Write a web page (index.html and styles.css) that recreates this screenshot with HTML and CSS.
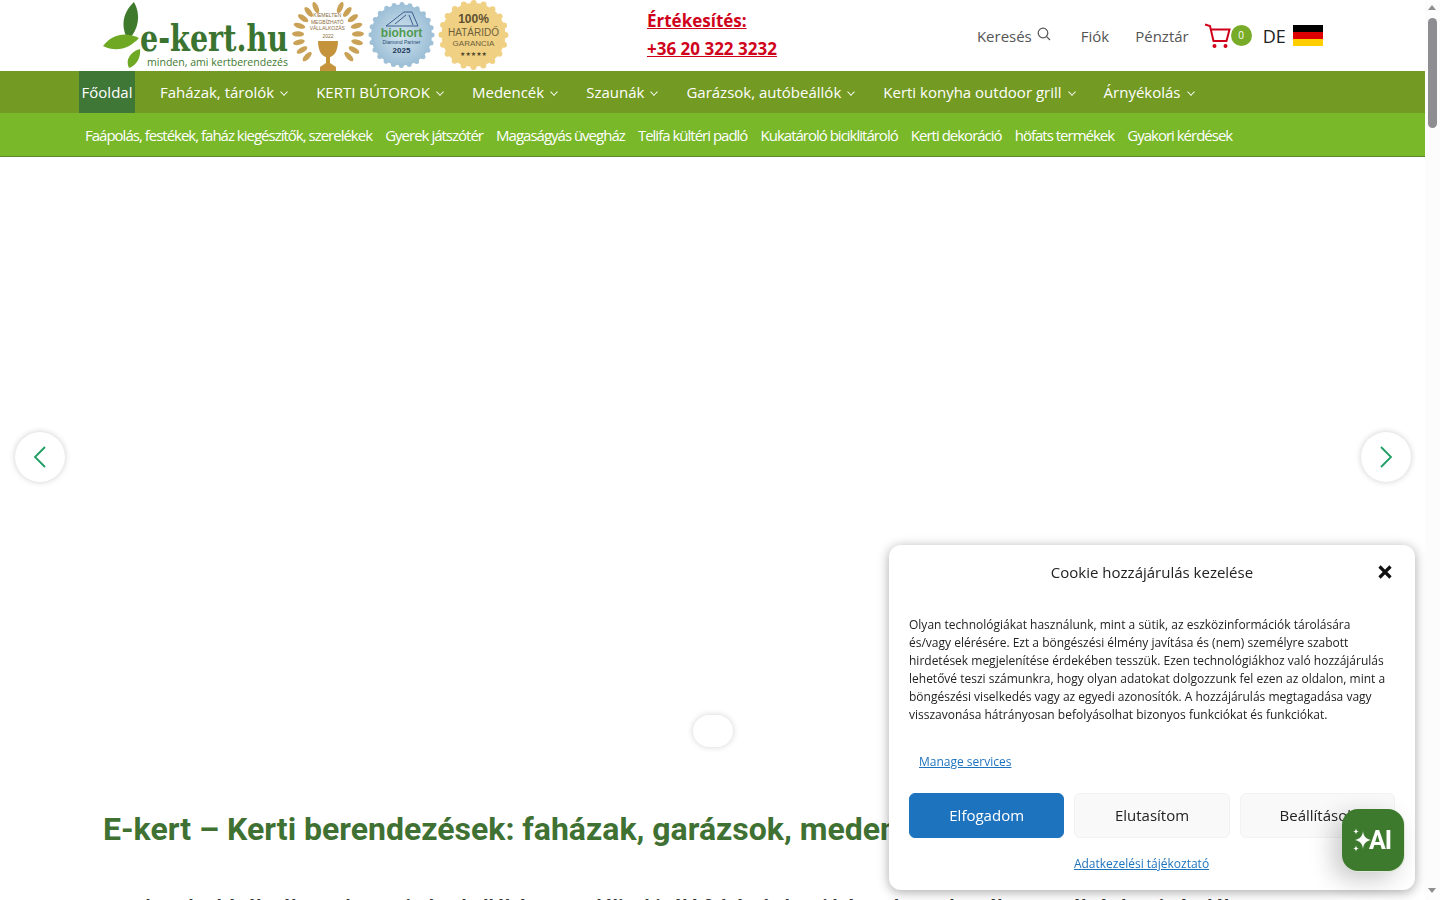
FILE: index.html
```html
<!DOCTYPE html>
<html lang="hu">
<head>
    <meta charset="UTF-8">
    <meta name="viewport" content="width=device-width, initial-scale=1.0">
    <title>E-kert - Kerti berendezések</title>
    <link rel="stylesheet" href="styles.css">
</head>
<body>
<div class="page">
    <div class="site">
        <header class="topbar">
            <a class="logo" href="#">
                <svg width="186" height="71" viewBox="0 0 186 71">
                    <path class="leaf-dark" d="M31 2 C20 12 17 26 25 40 C36 30 38 14 31 2 Z"/>
                    <path class="leaf-lime" d="M0 46 C10 33 24 32 36 38 C27 48 14 53 0 46 Z"/>
                    <path class="leaf-lime" d="M26 68 C22 60 27 52 37 49 C38 57 34 65 26 68 Z"/>
                    <text class="logo-name" x="37" y="51" textLength="148" lengthAdjust="spacingAndGlyphs">e-kert.hu</text>
                    <text class="logo-tag" x="44" y="66" textLength="141" lengthAdjust="spacingAndGlyphs">minden, ami kertberendezés</text>
                </svg>
            </a>
            <div class="badges">
                <svg class="badge badge-wreath" width="72" height="71" viewBox="0 0 72 71">
                    <g class="laurel">
                        <ellipse cx="36" cy="5" rx="2.6" ry="6" transform="rotate(24 36 35)"/>
                        <ellipse cx="36" cy="5" rx="2.6" ry="6" transform="rotate(40 36 35)"/>
                        <ellipse cx="36" cy="5" rx="2.6" ry="6" transform="rotate(56 36 35)"/>
                        <ellipse cx="36" cy="5" rx="2.6" ry="6" transform="rotate(72 36 35)"/>
                        <ellipse cx="36" cy="5" rx="2.6" ry="6" transform="rotate(88 36 35)"/>
                        <ellipse cx="36" cy="5" rx="2.6" ry="6" transform="rotate(104 36 35)"/>
                        <ellipse cx="36" cy="5" rx="2.6" ry="6" transform="rotate(120 36 35)"/>
                        <ellipse cx="36" cy="5" rx="2.6" ry="6" transform="rotate(136 36 35)"/>
                        <ellipse cx="36" cy="5" rx="2.6" ry="6" transform="rotate(-24 36 35)"/>
                        <ellipse cx="36" cy="5" rx="2.6" ry="6" transform="rotate(-40 36 35)"/>
                        <ellipse cx="36" cy="5" rx="2.6" ry="6" transform="rotate(-56 36 35)"/>
                        <ellipse cx="36" cy="5" rx="2.6" ry="6" transform="rotate(-72 36 35)"/>
                        <ellipse cx="36" cy="5" rx="2.6" ry="6" transform="rotate(-88 36 35)"/>
                        <ellipse cx="36" cy="5" rx="2.6" ry="6" transform="rotate(-104 36 35)"/>
                        <ellipse cx="36" cy="5" rx="2.6" ry="6" transform="rotate(-120 36 35)"/>
                        <ellipse cx="36" cy="5" rx="2.6" ry="6" transform="rotate(-136 36 35)"/>
                    </g>
                    <path class="trophy" d="M26 41 H46 C46 51 42 56 38 57 V63 L44 67 V71 H28 V67 L34 63 V57 C30 56 26 51 26 41 Z"/>
                    <text class="wreath-text">
                        <tspan x="36" y="17">KIEMELTEN</tspan>
                        <tspan x="36" y="23.5">MEGBÍZHATÓ</tspan>
                        <tspan x="36" y="30">VÁLLALKOZÁS</tspan>
                        <tspan x="36" y="38">2022</tspan>
                    </text>
                </svg>
                <svg class="badge" width="67" height="71" viewBox="0 0 67 71">
                    <defs>
                        <radialGradient id="bioShade" r="0.6">
                            <stop offset="0" stop-color="#d3e4ee"/>
                            <stop offset="1" stop-color="#92b8d2"/>
                        </radialGradient>
                    </defs>
                    <circle class="bio-edge" cx="33.5" cy="35" r="30.5"/>
                    <circle class="bio-disc" cx="33.5" cy="35" r="30.5"/>
                    <path class="bio-roof" d="M18 26 L36 12 H44 L50 26 Z M27 24 L38 15 M41 15 L45 25"/>
                    <text class="bio-name" x="33.5" y="37">biohort</text>
                    <text class="bio-small" x="33.5" y="44">Diamond Partner</text>
                    <text class="bio-year" x="33.5" y="53">2025</text>
                </svg>
                <svg class="badge" width="71" height="71" viewBox="0 0 71 71">
                    <circle class="gold-edge" cx="35.5" cy="35" r="32"/>
                    <circle class="gold-disc" cx="35.5" cy="35" r="32"/>
                    <text class="gold-pct" x="35.5" y="23">100%</text>
                    <text class="gold-big" x="35.5" y="36">HATÁRIDŐ</text>
                    <text class="gold-small" x="35.5" y="46">GARANCIA</text>
                    <text class="gold-stars" x="35.5" y="56">★★★★★</text>
                </svg>
            </div>
            <div class="sales">
                <a href="#">Értékesítés:</a>
                <a href="#">+36 20 322 3232</a>
            </div>
            <div class="usernav">
                <a class="usernav-search" href="#">Keresés
                    <svg width="14" height="14" viewBox="0 0 14 14" class="line-icon">
                        <circle cx="6" cy="6" r="4.8"/>
                        <path d="M9.6 9.6 L13 13"/>
                    </svg>
                </a>
                <a class="usernav-account" href="#">Fiók</a>
                <a class="usernav-checkout" href="#">Pénztár</a>
                <a class="cart" href="#">
                    <svg width="27" height="26" viewBox="0 0 27 26" class="cart-icon">
                        <path d="M1 1.5 L6 3 L9.5 18 H22.5 L25.5 6.5 H7"/>
                        <circle class="cart-wheel" cx="10.5" cy="23" r="2"/>
                        <circle class="cart-wheel" cx="21.5" cy="23" r="2"/>
                    </svg>
                    <span class="cart-count">0</span>
                </a>
                <a class="lang" href="#">DE <span class="flag"><i class="flag-black"></i><i class="flag-red"></i><i class="flag-gold"></i></span></a>
            </div>
        </header>

        <nav class="mainnav">
            <a class="active" href="#">Főoldal</a>
            <a href="#">Faházak, tárolók <span class="caret"></span></a>
            <a href="#">KERTI BÚTOROK <span class="caret"></span></a>
            <a href="#">Medencék <span class="caret"></span></a>
            <a href="#">Szaunák <span class="caret"></span></a>
            <a href="#">Garázsok, autóbeállók <span class="caret"></span></a>
            <a href="#">Kerti konyha outdoor grill <span class="caret"></span></a>
            <a href="#">Árnyékolás <span class="caret"></span></a>
        </nav>
        <nav class="subnav">
            <a href="#">Faápolás, festékek, faház kiegészítők, szerelékek</a>
            <a href="#">Gyerek játszótér</a>
            <a href="#">Magaságyás üvegház</a>
            <a href="#">Telifa kültéri padló</a>
            <a href="#">Kukatároló biciklitároló</a>
            <a href="#">Kerti dekoráció</a>
            <a href="#">höfats termékek</a>
            <a href="#">Gyakori kérdések</a>
        </nav>

        <section class="hero">
            <button class="hero-arrow hero-prev">
                <svg width="14" height="22" viewBox="0 0 14 22"><path d="M12 1 L2 11 L12 21"/></svg>
            </button>
            <button class="hero-arrow hero-next">
                <svg width="14" height="22" viewBox="0 0 14 22"><path d="M2 1 L12 11 L2 21"/></svg>
            </button>
            <div class="hero-dots"></div>
        </section>

        <main class="content">
            <h1>E-kert – Kerti berendezések: faházak, garázsok, medencék</h1>
            <p>Az e-kert.hu kínálatában a kert minden kellékét megtalálja: kiváló faházak, kerti bútorok, medencék, szaunák és kerti tárolók</p>
        </main>
    </div>
    <div class="scrollbar">
        <span class="scroll-up"></span>
        <span class="scroll-thumb"></span>
        <span class="scroll-down"></span>
    </div>
</div>

<div class="cookie">
    <div class="cookie-head">
        <span>Cookie hozzájárulás kezelése</span>
        <svg class="cookie-close" width="16" height="16" viewBox="0 0 16 16"><path d="M2.5 2.5 L13.5 13.5 M13.5 2.5 L2.5 13.5"/></svg>
    </div>
    <p class="cookie-text">Olyan technológiákat használunk, mint a sütik, az eszközinformációk tárolására és/vagy elérésére. Ezt a böngészési élmény javítása és (nem) személyre szabott hirdetések megjelenítése érdekében tesszük. Ezen technológiákhoz való hozzájárulás lehetővé teszi számunkra, hogy olyan adatokat dolgozzunk fel ezen az oldalon, mint a böngészési viselkedés vagy az egyedi azonosítók. A hozzájárulás megtagadása vagy visszavonása hátrányosan befolyásolhat bizonyos funkciókat és funkciókat.</p>
    <a class="cookie-manage" href="#">Manage services</a>
    <div class="cookie-buttons">
        <button class="cookie-btn cookie-accept">Elfogadom</button>
        <button class="cookie-btn">Elutasítom</button>
        <button class="cookie-btn">Beállítások</button>
    </div>
    <div class="cookie-foot"><a href="#">Adatkezelési tájékoztató</a></div>
</div>

<button class="ai-button">
    <svg width="18" height="24" viewBox="0 0 18 24">
        <path d="M10 3 C10.6 8.4 12.6 10.6 18 12 C12.6 13.4 10.6 15.6 10 21 C9.4 15.6 7.4 13.4 2 12 C7.4 10.6 9.4 8.4 10 3 Z"/>
        <path d="M3 0.5 C3.4 2.6 3.9 3.1 6 3.5 C3.9 3.9 3.4 4.4 3 6.5 C2.6 4.4 2.1 3.9 0 3.5 C2.1 3.1 2.6 2.6 3 0.5 Z"/>
        <path d="M3 17.5 C3.4 19.6 3.9 20.1 6 20.5 C3.9 20.9 3.4 21.4 3 23.5 C2.6 21.4 2.1 20.9 0 20.5 C2.1 20.1 2.6 19.6 3 17.5 Z"/>
    </svg>
    <span>AI</span>
</button>
</body>
</html>
```

FILE: styles.css
```css
* {
    box-sizing: border-box;
}
html, body {
    margin: 0;
    height: 900px;
    overflow: hidden;
}
body {
    font-family: "Open Sans", sans-serif;
    background-color: #fff;
    color: #333;
}
a {
    color: inherit;
    text-decoration: none;
}
.page {
    display: flex;
    height: 900px;
}
.site {
    width: 1425px;
    overflow: hidden;
}

/* top bar */
.topbar {
    display: flex;
    align-items: center;
    height: 71px;
    padding-left: 103px;
}
.logo {
    display: block;
    width: 186px;
    height: 71px;
}
.leaf-dark { fill: #3f7a2c; }
.leaf-lime { fill: #6fa822; }
.logo-name {
    font-family: "DejaVu Serif", serif;
    font-weight: bold;
    font-size: 37px;
    fill: #3a7430;
}
.logo-tag {
    font-size: 10.5px;
    fill: #3f7a33;
}
.badges {
    display: flex;
    gap: 3px;
    margin-left: 3px;
}
.badge {
    display: block;
}
.badge-wreath {
    margin-right: 1px;
}
.laurel { fill: #c9a258; }
.trophy { fill: #c4933c; }
.wreath-text {
    font-family: "Liberation Sans", sans-serif;
    font-size: 5px;
    fill: #8a6d3e;
    text-anchor: middle;
}
.bio-edge {
    fill: none;
    stroke: #9fc0d6;
    stroke-width: 5;
    stroke-linecap: round;
    stroke-dasharray: 0 8;
}
.bio-disc { fill: url(#bioShade); }
.bio-roof {
    fill: none;
    stroke: #3f5f8f;
    stroke-width: 1;
}
.bio-name {
    font-family: "Liberation Sans", sans-serif;
    font-size: 12px;
    font-weight: bold;
    fill: #4f9a52;
    text-anchor: middle;
}
.bio-small {
    font-family: "Liberation Sans", sans-serif;
    font-size: 5px;
    fill: #234a74;
    text-anchor: middle;
}
.bio-year {
    font-family: "Liberation Sans", sans-serif;
    font-size: 8px;
    font-weight: bold;
    fill: #223a5c;
    text-anchor: middle;
}
.gold-edge {
    fill: none;
    stroke: #f0d083;
    stroke-width: 6;
    stroke-linecap: round;
    stroke-dasharray: 0 10.05;
}
.gold-disc { fill: #f0d083; }
.gold-pct {
    font-family: "Liberation Sans", sans-serif;
    font-size: 12px;
    font-weight: bold;
    fill: #5c5032;
    text-anchor: middle;
}
.gold-big {
    font-family: "Liberation Sans", sans-serif;
    font-size: 10px;
    fill: #6d5f3c;
    text-anchor: middle;
}
.gold-small {
    font-family: "Liberation Sans", sans-serif;
    font-size: 8px;
    fill: #6d5f3c;
    text-anchor: middle;
}
.gold-stars {
    font-family: "DejaVu Sans", sans-serif;
    font-size: 6px;
    fill: #4f452c;
    text-anchor: middle;
}
.sales {
    display: flex;
    flex-direction: column;
    align-items: flex-start;
    align-self: flex-start;
    margin: 7px 0 0 138px;
    font-size: 17px;
    font-weight: 700;
    line-height: 28px;
    color: #d0021b;
}
.sales a {
    text-decoration: underline;
}
.usernav {
    display: flex;
    align-items: center;
    margin-left: 200px;
    font-size: 15px;
    color: #555;
}
.usernav-search {
    display: flex;
    align-items: center;
    gap: 5px;
}
.line-icon {
    fill: none;
    stroke: #555;
    stroke-width: 1.2;
    margin-top: -4px;
}
.usernav-account {
    margin-left: 30px;
}
.usernav-checkout {
    margin-left: 26px;
}
.cart {
    display: flex;
    align-items: center;
    margin-left: 15px;
}
.cart-icon {
    fill: none;
    stroke: #d0021b;
    stroke-width: 2;
}
.cart-wheel {
    fill: #d0021b;
    stroke: none;
}
.cart-count {
    width: 21px;
    height: 21px;
    border-radius: 50%;
    background-color: #78ac28;
    color: #fff;
    font-size: 10px;
    line-height: 21px;
    text-align: center;
}
.lang {
    display: flex;
    align-items: center;
    gap: 7px;
    margin-left: 11px;
    font-size: 18px;
    color: #222;
}
.flag {
    display: flex;
    flex-direction: column;
    width: 30px;
    height: 22px;
}
.flag i {
    flex: 1;
}
.flag-black { background-color: #000; }
.flag-red { background-color: #dd0000; }
.flag-gold { background-color: #ffce00; }

/* menus */
.mainnav {
    display: flex;
    height: 42px;
    padding-left: 79px;
    background-color: #739a22;
    font-size: 15px;
    line-height: 42px;
    color: #fff;
}
.mainnav a {
    display: flex;
    align-items: center;
    margin-right: 26px;
    white-space: nowrap;
}
.mainnav a.active {
    justify-content: center;
    width: 56px;
    margin-right: 25px;
    background-color: #3f7737;
}
.caret {
    width: 6px;
    height: 6px;
    margin: -1px 3px 0 7px;
    border-right: 1px solid #fff;
    border-bottom: 1px solid #fff;
    transform: rotate(45deg) scale(0.9);
}
.subnav {
    display: flex;
    gap: 13.15px;
    height: 44px;
    padding-left: 85px;
    background-color: #78b829;
    border-bottom: 1px solid #5f8a2c;
    font-size: 15px;
    letter-spacing: -1px;
    line-height: 44px;
    color: #fff;
    white-space: nowrap;
}

/* slider */
.hero {
    position: relative;
    height: 654px;
}
.hero-arrow {
    position: absolute;
    top: 275px;
    display: flex;
    align-items: center;
    justify-content: center;
    width: 50px;
    height: 50px;
    padding: 0;
    border: none;
    border-radius: 50%;
    background-color: #fff;
    box-shadow: 0 0 6px rgba(0,0,0,0.2);
}
.hero-arrow svg {
    fill: none;
    stroke: #1f9d63;
    stroke-width: 1.8;
}
.hero-prev { left: 15px; }
.hero-next { left: 1361px; }
.hero-dots {
    position: absolute;
    top: 558px;
    left: 693px;
    width: 40px;
    height: 32px;
    border-radius: 16px;
    background-color: #fff;
    box-shadow: 0 0 6px rgba(0,0,0,0.18);
}

/* content */
.content {
    padding-left: 103px;
}
.content h1 {
    margin: 0;
    font-family: Roboto, sans-serif;
    font-size: 32px;
    font-weight: 700;
    line-height: 36px;
    color: #3f7133;
    white-space: nowrap;
}
.content p {
    margin: 46px 0 0;
    font-size: 18px;
    font-weight: 700;
    line-height: 26px;
    color: #333;
    white-space: nowrap;
}

/* fake browser scrollbar */
.scrollbar {
    position: relative;
    width: 15px;
    height: 900px;
    background-color: #fcfcfc;
}
.scroll-thumb {
    position: absolute;
    top: 18px;
    left: 3px;
    width: 9px;
    height: 110px;
    border-radius: 5px;
    background-color: #8e8e92;
}
.scroll-up, .scroll-down {
    position: absolute;
    left: 3px;
    width: 0;
    height: 0;
    border-left: 4.5px solid transparent;
    border-right: 4.5px solid transparent;
}
.scroll-up {
    top: 5px;
    border-bottom: 5px solid #8e8e92;
}
.scroll-down {
    top: 888px;
    border-top: 5px solid #8e8e92;
}

/* cookie dialog */
.cookie {
    position: fixed;
    left: 889px;
    top: 545px;
    width: 526px;
    height: 345px;
    padding: 0 20px;
    border-radius: 12px;
    background-color: #fff;
    box-shadow: 0 2px 12px rgba(0,0,0,0.35);
    font-size: 12px;
    color: #222;
}
.cookie-head {
    position: relative;
    padding-top: 17px;
    font-size: 15px;
    line-height: 20px;
    text-align: center;
}
.cookie-close {
    position: absolute;
    top: 19px;
    right: 2px;
    fill: none;
    stroke: #111;
    stroke-width: 3.2;
}
.cookie-text {
    margin: 34px 0 0;
    line-height: 18px;
}
.cookie-manage {
    display: inline-block;
    margin: 29px 0 0 10px;
    line-height: 18px;
    color: #1e73be;
    text-decoration: underline;
}
.cookie-buttons {
    display: flex;
    gap: 10px;
    margin-top: 22px;
}
.cookie-btn {
    flex: 1;
    height: 45px;
    padding: 0 0 2px;
    border: 1px solid #f2f2f2;
    border-radius: 6px;
    background-color: #f9f9f9;
    font-family: "Open Sans", sans-serif;
    font-size: 15px;
    color: #222;
}
.cookie-accept {
    border-color: #1e73be;
    background-color: #1e73be;
    color: #fff;
}
.cookie-foot {
    margin-top: 17px;
    padding-right: 21px;
    line-height: 18px;
    text-align: center;
}
.cookie-foot a {
    color: #1e73be;
    text-decoration: underline;
}

/* AI chat button */
.ai-button {
    position: fixed;
    left: 1342px;
    top: 809px;
    display: flex;
    align-items: center;
    justify-content: center;
    width: 62px;
    height: 62px;
    padding: 0 2px 0 0;
    border: none;
    border-radius: 16px;
    background-color: #3e7a2e;
    box-shadow: 1px 1px 0 #dfe8d8, -8px 8px 24px rgba(0,0,0,0.22);
    color: #fff;
    font-family: Roboto, sans-serif;
    font-size: 25px;
    font-weight: 700;
    letter-spacing: -1px;
}
.ai-button svg {
    fill: #fff;
    margin-right: -2px;
}
```
